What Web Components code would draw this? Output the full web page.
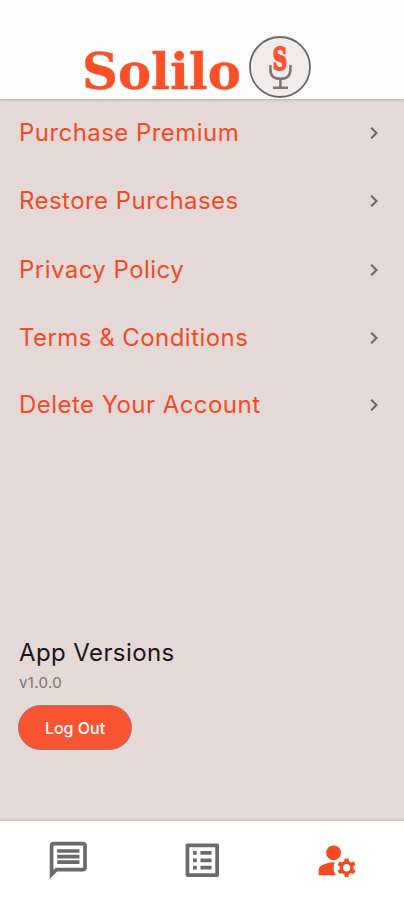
<!DOCTYPE html>
<html lang="en">
<head>
<meta charset="utf-8">
<title>Solilo</title>
<style>
html, body { margin: 0; height: 100%; }
body { background: #e5d9d8; font-family: Inter, "Liberation Sans", sans-serif; overflow: hidden; }
</style>
</head>
<body>
<solilo-app></solilo-app>
<script>
const define = (name, html) => {
  const template = document.createElement('template');
  template.innerHTML = html;
  customElements.define(name, class extends HTMLElement {
    constructor() {
      super();
      this.attachShadow({ mode: 'open' }).append(template.content.cloneNode(true));
    }
  });
};

define('mic-logo', `
<style>:host{display:block;width:64px;height:64px;flex:none} svg{display:block}</style>
<svg width="64" height="64" viewBox="0 0 64 64">
  <circle cx="32" cy="32" r="30" fill="#f1eceb" stroke="#6b6767" stroke-width="1.8"/>
  <path d="M22.4 30v4.5q0 9.3 10 9.3t10-9.3V30M32.4 44v8.5M25 52.7h15" fill="none" stroke="#7b7777" stroke-width="2.5"/>
  <text transform="translate(31.8 35.2) scale(.62 1)" text-anchor="middle" font-family="DejaVu Serif" font-weight="700" font-size="32" fill="#f85431" stroke="#f85431" stroke-width="2">S</text>
</svg>`);

define('app-header', `
<style>
:host{display:flex;box-sizing:border-box;height:99px;padding:35px 0 0 82px;background:#fdfdfd;box-shadow:0 1px 2px #b9acac;flex:none;position:relative}
.word{width:166px;height:64px;flex:none;padding-top:3px;box-sizing:border-box;font:700 51px/66px "DejaVu Serif",serif;color:#f85128;white-space:nowrap}
.word span{display:inline-block;transform:scaleX(.975);transform-origin:left;-webkit-text-stroke:.4px #f85128}
</style>
<div class="word"><span><slot></slot></span></div><mic-logo></mic-logo>`);

define('menu-row', `
<style>
:host{display:flex;align-items:center;justify-content:space-between;height:68px;padding:0 25.5px 0 19px;font-size:24px;line-height:30px;color:#f24a25;letter-spacing:.45px;white-space:nowrap}
svg{flex:none}
</style>
<span><slot></slot></span>
<svg width="10" height="14" viewBox="0 0 10 14"><path d="M2.2 1.7 7.5 7 2.2 12.3" fill="none" stroke="#6d6565" stroke-width="2"/></svg>`);

define('pill-button', `
<style>
:host{display:block}
button{box-sizing:border-box;width:114px;height:45px;border:1px solid #947b77;border-radius:23px;background:#f85431;color:#fff;font:500 16px/20px Inter,sans-serif;padding:1px 0 0;display:block}
</style>
<button type="button"><slot></slot></button>`);

define('version-info', `
<style>
:host{display:block;padding-left:18px}
h2{margin:0 0 0 1px;font:400 24px/30px Inter,sans-serif;letter-spacing:.4px;color:#1b1718}
p{margin:6px 0 13px 1px;font-size:15px;line-height:18px;letter-spacing:.35px;color:#7c7474}
</style>
<h2><slot name="title"></slot></h2><p><slot name="version"></slot></p><slot></slot>`);

define('nav-item', `
<style>:host{display:flex;flex:1;justify-content:center;color:#6b6b6b} :host([active]){color:#f24a22} ::slotted(svg){width:44.6px;height:44.6px;fill:currentColor}</style>
<slot></slot>`);

define('tab-bar', `
<style>:host{display:flex;box-sizing:border-box;height:79px;padding:17px 0 0 1px;background:#fff;box-shadow:0 -1px 2px #c5b8b7;flex:none}</style>
<slot></slot>`);

define('solilo-app', `
<style>
:host{display:flex;flex-direction:column;height:900px;width:404px;background:#e5d9d8}
main{flex:1;display:flex;flex-direction:column}
.menu{height:539px;flex:none}
menu-row:nth-child(2){height:67px}
menu-row:nth-child(3){height:71px}
menu-row:nth-child(4){height:65px}
menu-row:nth-child(5){height:70px}
</style>
<app-header>Solilo</app-header>
<main>
  <div class="menu">
    <menu-row>Purchase Premium</menu-row>
    <menu-row>Restore Purchases</menu-row>
    <menu-row>Privacy Policy</menu-row>
    <menu-row>Terms &amp; Conditions</menu-row>
    <menu-row>Delete Your Account</menu-row>
  </div>
  <version-info><span slot="title">App Versions</span><span slot="version">v1.0.0</span><pill-button>Log Out</pill-button></version-info>
</main>
<tab-bar>
  <nav-item><svg viewBox="0 0 24 24"><path d="M4 4h16v12H5.17L4 17.17V4m0-2c-1.1 0-1.99.9-1.99 2L2 22l4-4h14c1.1 0 2-.9 2-2V4c0-1.1-.9-2-2-2H4zm2 10h12v2H6v-2zm0-3h12v2H6V9zm0-3h12v2H6V6z"/></svg></nav-item>
  <nav-item><svg viewBox="0 0 24 24"><path d="M19 5v14H5V5h14m1.1-2H3.9c-.5 0-.9.4-.9.9v16.2c0 .4.4.9.9.9h16.2c.4 0 .9-.5.9-.9V3.9c0-.5-.5-.9-.9-.9zM11 7h6v2h-6V7zm0 4h6v2h-6v-2zm0 4h6v2h-6zM7 7h2v2H7zm0 4h2v2H7zm0 4h2v2H7z"/></svg></nav-item>
  <nav-item active><svg viewBox="0 0 24 24"><circle cx="10" cy="8" r="4"/><path d="M10.67 13.02C10.45 13.01 10.23 13 10 13c-2.42 0-4.68.67-6.61 1.82-.88.52-1.39 1.5-1.39 2.53V20h9.26c-.79-1.13-1.26-2.51-1.26-4 0-1.07.25-2.07.67-2.98zM20.75 16c0-.22-.03-.42-.06-.63l1.14-1.01-1-1.73-1.45.49c-.32-.27-.68-.48-1.08-.63L18 11h-2l-.3 1.49c-.4.15-.76.36-1.08.63l-1.45-.49-1 1.73 1.14 1.01c-.03.21-.06.41-.06.63s.03.42.06.63l-1.14 1.01 1 1.73 1.45-.49c.32.27.68.48 1.08.63L16 21h2l.3-1.49c.4-.15.76-.36 1.08-.63l1.45.49 1-1.73-1.14-1.01c.03-.21.06-.41.06-.63zM17 18c-1.1 0-2-.9-2-2s.9-2 2-2 2 .9 2 2-.9 2-2 2z"/></svg></nav-item>
</tab-bar>`);
</script>
</body>
</html>
